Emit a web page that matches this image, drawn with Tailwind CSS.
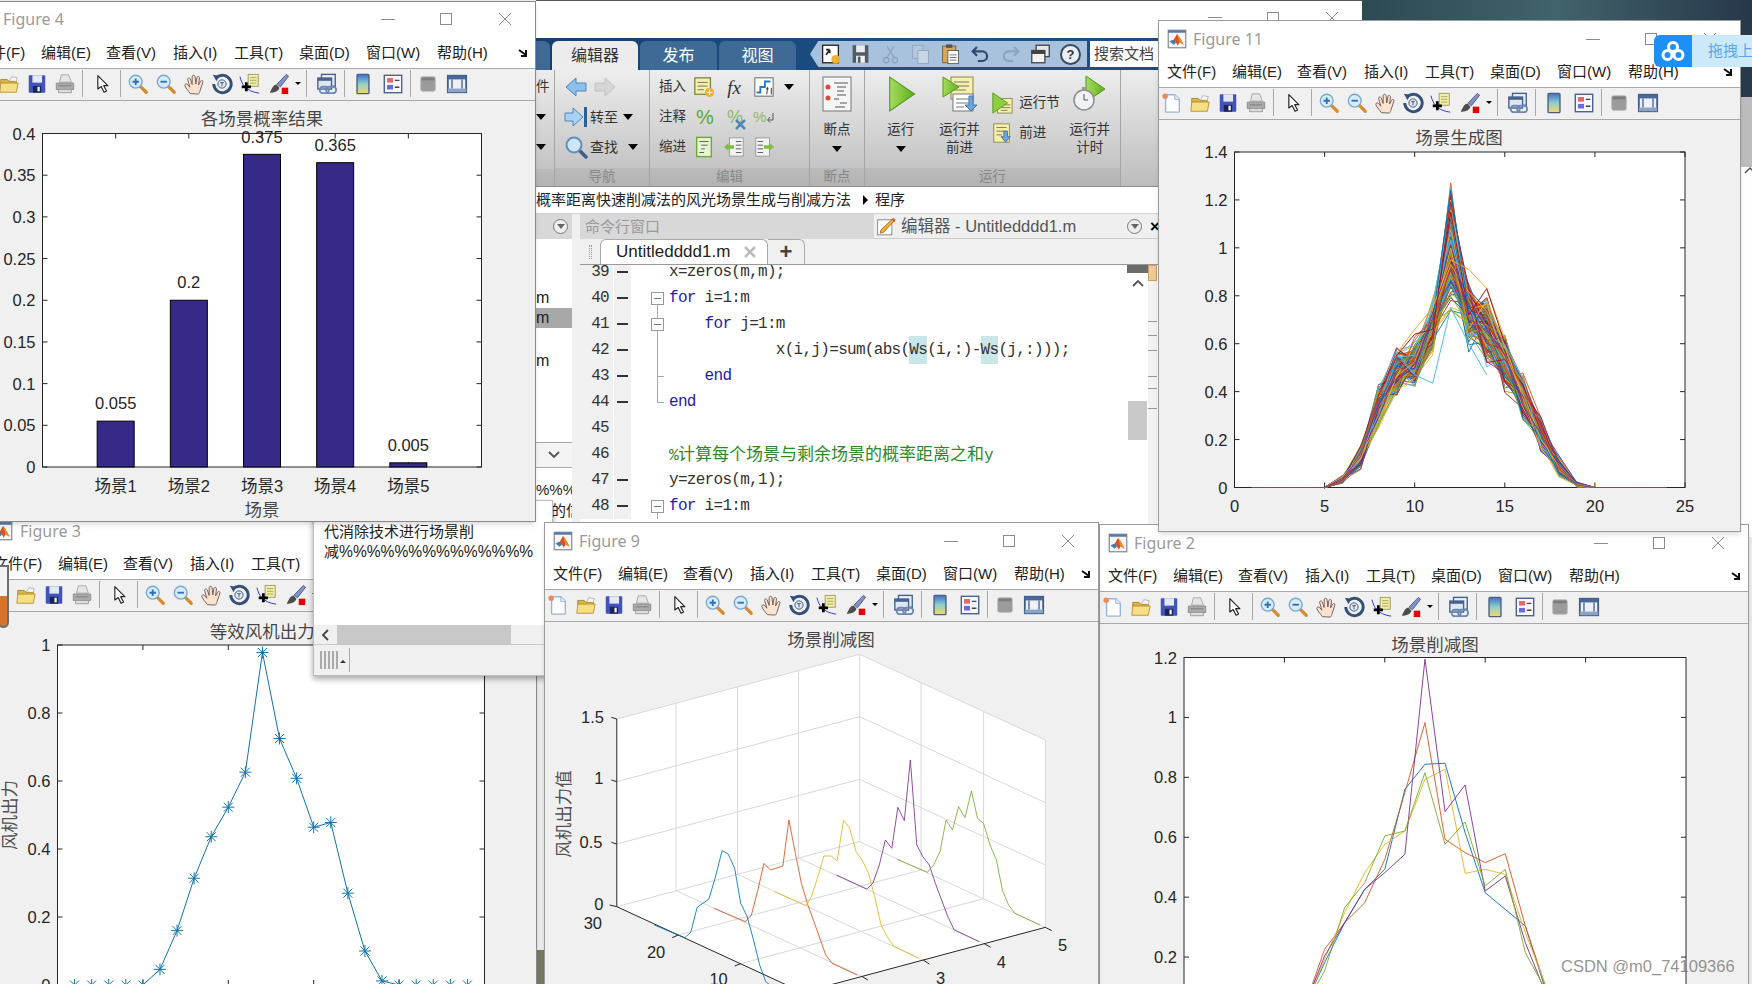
<!DOCTYPE html>
<html lang="zh">
<head>
  <meta charset="UTF-8" />
  <title>MATLAB Figures</title>
  <script src="https://cdn.jsdelivr.net/npm/@tailwindcss/browser@4"></script>
</head>
<body class="relative w-[1752px] h-[984px] overflow-hidden bg-[#ececec] font-['Liberation_Sans','Noto_Sans_CJK_SC',sans-serif] text-[#222]">

<!-- icon sheet -->
<svg class="absolute w-0 h-0">
  <defs>
    <linearGradient id="cbgrad" x1="0" y1="0" x2="0" y2="1"><stop offset="0" stop-color="#3f6fd0"/><stop offset=".5" stop-color="#8fd0c8"/><stop offset="1" stop-color="#f5d86a"/></linearGradient>
    <linearGradient id="playgrad" x1="0" y1="0" x2="1" y2="0"><stop offset="0" stop-color="#a6dc5c"/><stop offset="1" stop-color="#5fae20"/></linearGradient>
    <symbol id="i-new" viewBox="0 0 24 24"><path d="M5 3h10l5 5v13a1 1 0 0 1-1 1H6a1 1 0 0 1-1-1z" fill="#fdfdfe" stroke="#9ab4d6" stroke-width="1.5"/><path d="M15 3v5h5" fill="#e4edf8" stroke="#9ab4d6"/><circle cx="4.5" cy="4.5" r="3" fill="#ec8a5a"/></symbol>
    <symbol id="i-open" viewBox="0 0 24 24"><path d="M3 11V7h7l2 2h8v4z" fill="#d9b34a" stroke="#a8842a"/><path d="M13 8l2-4 6 1-1 4" fill="#f4f4f4" stroke="#b5b5b5"/><path d="M2 21l1-10h19l-2 10z" fill="#f6df85" stroke="#b8922f"/></symbol>
    <symbol id="i-save" viewBox="0 0 24 24"><rect x="3" y="2.5" width="18" height="19" rx="1" fill="#4254bb"/><rect x="7" y="2.5" width="10.5" height="8" fill="#e3e9f6"/><rect x="7.5" y="14" width="9" height="7.5" fill="#1b2457"/><rect x="12.5" y="15" width="2.5" height="5" fill="#f2f2f2"/></symbol>
    <symbol id="i-print" viewBox="0 0 24 24"><path d="M8 2h8l3 8H6z" fill="#e6e6e6" stroke="#a5a5a5"/><path d="M2.500 11h19v7h-19z" fill="#ababab" stroke="#8a8a8a"/><path d="M5 18h14v3.500H5z" fill="#dedede" stroke="#9a9a9a"/><path d="M5 14h14" stroke="#7c7c7c"/></symbol>
    <symbol id="i-arrow" viewBox="0 0 24 24"><path d="M7 2v16l4-3 3.500 7 3-1.500-3.500-6.500h5z" fill="#fff" stroke="#222" stroke-width="1.400" stroke-linejoin="round"/></symbol>
    <symbol id="i-zin" viewBox="0 0 24 24"><path d="M14.500 14.500l6.500 6.500" stroke="#d98a2b" stroke-width="3.500" stroke-linecap="round"/><circle cx="9.500" cy="9.500" r="7" fill="#d6ecfa" stroke="#7aa7cf" stroke-width="1.500"/><path d="M6 9.500h7M9.500 6v7" stroke="#2f6fb5" stroke-width="2"/></symbol>
    <symbol id="i-zout" viewBox="0 0 24 24"><path d="M14.500 14.500l6.500 6.500" stroke="#d98a2b" stroke-width="3.500" stroke-linecap="round"/><circle cx="9.500" cy="9.500" r="7" fill="#d6ecfa" stroke="#7aa7cf" stroke-width="1.500"/><path d="M6 9.500h7" stroke="#2f6fb5" stroke-width="2"/></symbol>
    <symbol id="i-hand" viewBox="0 0 24 24"><path d="M8 22.500c-2-3-6-7-6-9s2-2 3-1l2.500 3L5 7c0-2 2-2 3-.5l2 6V4c0-2 3-2 3.200 0l.8 8 1.200-7c.3-2 3-1.500 2.800.5l-1 7.500 2.200-4c1-1.500 3-.8 2.500 1l-3 9c-.5 2-1 3-2 4z" fill="#fbe2cf" stroke="#6b5a55"/></symbol>
    <symbol id="i-rot" viewBox="0 0 24 24"><path d="M6 5a9.500 9.500 0 1 1-3 7" fill="none" stroke="#34507a" stroke-width="3.200"/><path d="M2 2l7 1-3 6z" fill="#34507a"/><circle cx="12" cy="12" r="4.500" fill="#e3e9f2" stroke="#34507a"/><path d="M10 10.500h4M12 10.500v4" stroke="#34507a"/></symbol>
    <symbol id="i-dc" viewBox="0 0 24 24"><rect x="10" y="1.500" width="11" height="13" fill="#f5eda6" stroke="#9a9a66"/><path d="M12 5h7M12 8h7M12 11h7" stroke="#a5a56a"/><path d="M1 4c2 8 6 16 21 18" stroke="#2a2ad0" fill="none"/><path d="M8 10v10M3 15h10" stroke="#000" stroke-width="3"/></symbol>
    <symbol id="i-brush" viewBox="0 0 24 24"><path d="M20 1.500l2.500 2-9 11.500-3.500-3z" fill="#7f93c6" stroke="#4a5a8c"/><path d="M9.500 12.500c-3 0-5 3-7.500 9 4 0 9-1 10.500-5.500z" fill="#4d4d4d"/><rect x="15" y="16" width="7" height="7" fill="#e60000"/></symbol>
    <symbol id="i-link" viewBox="0 0 24 24"><rect x="6" y="1.500" width="15" height="13" fill="#e8eef8" stroke="#46618f" stroke-width="1.500"/><rect x="2" y="5.500" width="15" height="12" fill="#dfe6f2" stroke="#46618f" stroke-width="1.500"/><rect x="2" y="5.500" width="15" height="3" fill="#46618f"/><rect x="4" y="15" width="10" height="7" rx="3.500" fill="none" stroke="#6c88b5" stroke-width="2"/><rect x="11" y="15" width="11" height="7" rx="3.500" fill="none" stroke="#6c88b5" stroke-width="2"/></symbol>
    <symbol id="i-cb" viewBox="0 0 24 24"><rect x="5.500" y="1.500" width="13" height="21" rx="1" fill="url(#cbgrad)" stroke="#4b5f7d" stroke-width="1.500"/></symbol>
    <symbol id="i-leg" viewBox="0 0 24 24"><rect x="2.500" y="2.500" width="19" height="19" fill="#f7f7fb" stroke="#46618f" stroke-width="1.500"/><rect x="5.500" y="5.500" width="6.500" height="5" fill="#e06a6a"/><rect x="5.500" y="13" width="6.500" height="5" fill="#6a6ae0"/><path d="M14 8h5M14 15.500h5" stroke="#444" stroke-width="1.500"/></symbol>
    <symbol id="i-grey" viewBox="0 0 24 24"><rect x="4" y="4" width="16" height="16" rx="2" fill="#9b9b9b" stroke="#bdbdbd"/><rect x="5" y="5" width="14" height="3" fill="#7c7c7c"/></symbol>
    <symbol id="i-frame" viewBox="0 0 24 24"><rect x="2" y="3" width="20" height="18" fill="#eef2f8" stroke="#3f5d8c" stroke-width="2"/><rect x="2" y="3" width="20" height="4" fill="#4a6797"/><rect x="2" y="17" width="20" height="4" fill="#8ea3c4"/><path d="M6.500 7v10M17.500 7v10" stroke="#4a6797" stroke-width="1.500"/></symbol>
    <symbol id="i-matlab" viewBox="0 0 24 24"><rect x="1.500" y="1.500" width="21" height="21" fill="#f4f6fa" stroke="#8c8c8c" stroke-width="1.500"/><rect x="1.500" y="1.500" width="21" height="3" fill="#5b7aa8"/><path d="M3 15l5-2 4-7 3 4 5 9-5-3-2 4-3-5z" fill="#d9531e"/><path d="M3 15l5-2 3 3-3 3z" fill="#3d7fb5"/><path d="M12 6l3 4 5 9-5-3z" fill="#f28c28"/></symbol>
    <symbol id="r-back" viewBox="0 0 24 24"><path d="M2 12l10-9v5h10v8H12v5z" fill="#8cc0ec" stroke="#4f86bd"/></symbol>
    <symbol id="r-fwd" viewBox="0 0 24 24"><path d="M22 12L12 3v5H2v8h10v5z" fill="#d6d6d6" stroke="#c2c2c2"/></symbol>
    <symbol id="r-goto" viewBox="0 0 24 24"><path d="M1 8h8V3l10 9-10 9v-5H1z" fill="#a9d2f2" stroke="#4f86bd"/><path d="M21.500 2v20" stroke="#2f5f98" stroke-width="3"/></symbol>
    <symbol id="r-find" viewBox="0 0 24 24"><path d="M14 14l8 8" stroke="#3f5d8c" stroke-width="3.500" stroke-linecap="round"/><circle cx="10" cy="10" r="7.500" fill="#cfe4f6" stroke="#5f8fc0" stroke-width="2"/></symbol>
    <symbol id="r-ins" viewBox="0 0 24 24"><rect x="2" y="2" width="17" height="18" fill="#f7eea8" stroke="#7d8a55" stroke-width="1.500"/><path d="M5 7h11M5 11h11M5 15h7" stroke="#6a6a6a"/><circle cx="18" cy="18" r="5" fill="#f0b030"/><path d="M15 18h6M18 15v6" stroke="#fff"/></symbol>
    <symbol id="r-fi" viewBox="0 0 24 24"><rect x="2" y="2" width="20" height="20" fill="#fbfbfb" stroke="#777" stroke-width="1.200"/><path d="M4 18h4v-6h5V6h6" fill="none" stroke="#2a78c4" stroke-width="2"/><path d="M15 20l1-8M14 14h3M20 13v7" stroke="#333"/></symbol>
    <symbol id="r-indent" viewBox="0 0 24 24"><rect x="4" y="1.500" width="16" height="21" fill="#e6f4d0" stroke="#6aa83a" stroke-width="1.500"/><path d="M7 6h10M9 10h7M9 14h4M7 18h5" stroke="#555"/></symbol>
    <symbol id="r-indent2" viewBox="0 0 24 24"><rect x="7" y="2" width="15" height="20" fill="#f2f2f2" stroke="#999"/><path d="M14 6h6M14 10h6M14 14h6M14 18h6" stroke="#555"/><path d="M1 12l5-4v2h6v4H6v2z" fill="#7cc03c" transform="translate(0 0)"/></symbol>
    <symbol id="r-indent3" viewBox="0 0 24 24"><rect x="3" y="2" width="15" height="20" fill="#f2f2f2" stroke="#999"/><path d="M5 6h6M5 10h6M5 14h6M5 18h6" stroke="#555"/><path d="M23 12l-5-4v2h-6v4h6v2z" fill="#7cc03c"/></symbol>
    <symbol id="r-bp" viewBox="0 0 40 40"><rect x="6" y="3" width="28" height="34" fill="#f5f5f5" stroke="#777"/><circle cx="11" cy="13" r="2.500" fill="#d84a3a"/><circle cx="11" cy="24" r="2.500" fill="#d84a3a"/><path d="M17 9h14M20 13h9M20 17h7M20 21h9M17 25h5M23 29h7M18 33h10" stroke="#555"/></symbol>
    <symbol id="r-play" viewBox="0 0 32 36"><path d="M6 3l22 15L6 33z" fill="url(#playgrad)" stroke="#4f9a1a"/></symbol>
    <symbol id="r-runadv" viewBox="0 0 40 40"><rect x="12" y="3" width="22" height="22" fill="#f7eea8" stroke="#8a8a55"/><path d="M15 8h15M15 12h15M15 16h12" stroke="#777"/><rect x="14" y="20" width="20" height="17" fill="#fff" stroke="#777"/><path d="M17 25h13M17 29h13M17 33h8" stroke="#777"/><path d="M4 3l16 10-16 10z" fill="url(#playgrad)" stroke="#4f9a1a"/><path d="M30 22v9h-4l6 6 6-6h-4v-9z" fill="#6fa6dc" stroke="#3f76ae"/></symbol>
    <symbol id="r-runsec" viewBox="0 0 24 24"><rect x="7" y="7" width="16" height="16" fill="#f7eea8" stroke="#8a8a55"/><path d="M11 14h10M11 17h10M11 20h7" stroke="#7a7a55"/><path d="M2 1l16 11L2 23z" fill="#8fce42" stroke="#4f9a1a"/></symbol>
    <symbol id="r-adv" viewBox="0 0 24 24"><rect x="3" y="2" width="17" height="20" fill="#f7eea8" stroke="#8a8a55"/><path d="M6 6h11M6 10h11M6 14h6" stroke="#7a7a55"/><path d="M14 10v6h-3l5 6 5-6h-3v-6z" fill="#6fa6dc" stroke="#3f76ae"/></symbol>
    <symbol id="r-timer" viewBox="0 0 40 40"><path d="M16 2l19 13-19 13z" fill="url(#playgrad)" stroke="#4f9a1a"/><circle cx="14" cy="26" r="10" fill="#f0f2f5" stroke="#8c8c8c" stroke-width="1.500"/><path d="M14 20v6h4" stroke="#555" fill="none"/><rect x="12" y="13" width="4" height="3" fill="#999"/></symbol>
    <symbol id="q-dark" viewBox="0 0 24 24"><rect x="3" y="2" width="18" height="20" fill="#fff" stroke="#222" stroke-width="1.500"/><path d="M7 13l4-6M11 7H7M11 7v4" stroke="#222" stroke-width="2" fill="none"/><circle cx="18" cy="18" r="5" fill="#f0b030"/></symbol>
    <symbol id="q-save" viewBox="0 0 24 24"><rect x="3" y="2" width="18" height="20" fill="#525a63"/><rect x="7" y="2" width="10" height="8" fill="#e8ecf2"/><rect x="7" y="14" width="10" height="8" fill="#f2f2f2"/><rect x="9" y="15" width="3" height="7" fill="#525a63"/></symbol>
    <symbol id="q-cut" viewBox="0 0 24 24"><path d="M8 3l8 13M16 3L8 16" stroke="#8fa3b8" stroke-width="1.500"/><circle cx="7" cy="19" r="3" fill="none" stroke="#8fa3b8" stroke-width="1.500"/><circle cx="17" cy="19" r="3" fill="none" stroke="#8fa3b8" stroke-width="1.500"/></symbol>
    <symbol id="q-copy" viewBox="0 0 24 24"><rect x="3" y="2" width="12" height="15" fill="#b5c7da" stroke="#8fa3b8"/><rect x="9" y="8" width="12" height="15" fill="#c8d7e6" stroke="#8fa3b8"/></symbol>
    <symbol id="q-paste" viewBox="0 0 24 24"><rect x="3" y="3" width="15" height="19" fill="#d7a85c" stroke="#6a5a3a"/><rect x="7" y="1" width="7" height="4" fill="#555"/><rect x="9" y="8" width="12" height="15" fill="#fff" stroke="#555"/><path d="M11 13h8M11 16h8M11 19h8" stroke="#666"/></symbol>
    <symbol id="q-undo" viewBox="0 0 24 24"><path d="M8 4L3 9l5 5M3 9h11a5.500 5.500 0 0 1 0 11H9" fill="none" stroke="#2f4a6e" stroke-width="2.500"/></symbol>
    <symbol id="q-redo" viewBox="0 0 24 24"><path d="M16 4l5 5-5 5M21 9H10a5.500 5.500 0 0 0 0 11h5" fill="none" stroke="#8fa3b8" stroke-width="2.500"/></symbol>
    <symbol id="q-win" viewBox="0 0 24 24"><rect x="7" y="2" width="15" height="13" fill="#e6e6e6" stroke="#444" stroke-width="1.500"/><rect x="2" y="8" width="15" height="14" fill="#f2f2f2" stroke="#444" stroke-width="1.500"/><rect x="2" y="8" width="15" height="4" fill="#444"/></symbol>
    <symbol id="edit-i" viewBox="0 0 24 24"><rect x="2" y="4" width="17" height="18" fill="#fff" stroke="#777"/><path d="M21 2l2 2L9 19l-4 1 1-4z" fill="#f0b030" stroke="#a85a20"/><path d="M19.500 3l3 3" stroke="#d84a3a" stroke-width="2"/></symbol>
  </defs>
</svg>

<!-- reusable figure chrome -->
<template id="fig-menu">
  <span class="w-[65px] shrink-0">文件(F)</span>
  <span class="w-[65px] shrink-0">编辑(E)</span>
  <span class="w-[67px] shrink-0">查看(V)</span>
  <span class="w-[61px] shrink-0">插入(I)</span>
  <span class="w-[65px] shrink-0">工具(T)</span>
  <span class="w-[67px] shrink-0">桌面(D)</span>
  <span class="w-[71px] shrink-0">窗口(W)</span>
  <span class="w-[65px] shrink-0">帮助(H)</span>
</template>
<template id="fig-tools">
  <svg class="ml-[2px] mr-[3px] w-[22px] h-[22px] shrink-0"><use href="#i-new"/></svg>
  <svg class="mx-[3px] w-[22px] h-[22px] shrink-0"><use href="#i-open"/></svg>
  <svg class="mx-[3px] w-[22px] h-[22px] shrink-0"><use href="#i-save"/></svg>
  <svg class="mx-[3px] w-[22px] h-[22px] shrink-0"><use href="#i-print"/></svg>
  <span class="ml-[3px] w-px h-[27px] bg-[#a8a8a8] shrink-0"></span>
  <svg class="mr-[8px] w-[20px] h-[20px] shrink-0 ml-[9px]"><use href="#i-arrow"/></svg>
  <span class="w-px h-[27px] bg-[#a8a8a8] shrink-0"></span>
  <svg class="ml-[6px] mr-[3px] w-[22px] h-[22px] shrink-0"><use href="#i-zin"/></svg>
  <svg class="mx-[3px] w-[22px] h-[22px] shrink-0"><use href="#i-zout"/></svg>
  <svg class="mx-[3px] w-[22px] h-[22px] shrink-0"><use href="#i-hand"/></svg>
  <svg class="mx-[3px] w-[22px] h-[22px] shrink-0"><use href="#i-rot"/></svg>
  <svg class="mx-[3px] w-[22px] h-[22px] shrink-0"><use href="#i-dc"/></svg>
  <svg class="mx-[3.500px] w-[22px] h-[22px] shrink-0"><use href="#i-brush"/></svg>
  <span class="ml-[2px] w-0 h-0 border-x-[3px] border-t-[3px] border-x-transparent border-t-black shrink-0"></span>
  <span class="ml-[5px] w-px h-[27px] bg-[#a8a8a8] shrink-0"></span>
  <svg class="ml-[9px] mr-[6px] w-[22px] h-[22px] shrink-0"><use href="#i-link"/></svg>
  <span class="w-px h-[27px] bg-[#a8a8a8] shrink-0"></span>
  <svg class="ml-[7px] mr-[5px] w-[22px] h-[22px] shrink-0"><use href="#i-cb"/></svg>
  <svg class="mx-[3px] w-[22px] h-[22px] shrink-0"><use href="#i-leg"/></svg>
  <span class="ml-[3px] w-px h-[27px] bg-[#a8a8a8] shrink-0"></span>
  <svg class="ml-[6px] mr-[4px] w-[22px] h-[22px] shrink-0"><use href="#i-grey"/></svg>
  <svg class="mx-[3px] w-[22px] h-[22px] shrink-0"><use href="#i-frame"/></svg>
</template>
<template id="win-ctrl">
  <span class="w-[14px] h-px bg-[#8c8c8c] mr-[45px]"></span>
  <span class="w-[12px] h-[12px] border border-[#8c8c8c] mr-[46px]"></span>
  <svg class="w-[14px] h-[14px] mr-[23px]" viewBox="0 0 14 14"><path d="M1 1l12 12M13 1L1 13" stroke="#8c8c8c"/></svg>
</template>

<!-- wallpaper and the window behind everything -->
<div class="absolute left-[1362px] top-0 w-[390px] h-[97px] bg-gradient-to-r from-[#2c4a52] via-[#41636b] to-[#27384a]"></div>
<div class="absolute left-[1741px] top-[97px] w-[11px] h-[70px] bg-[#bdbdbd]"></div>
<div class="absolute left-[1741px] top-[167px] w-[11px] h-[370px] bg-white"><svg class="w-[11px] h-[10px] mt-[-1px] ml-[3px]" viewBox="0 0 11 10"><path d="M1 7l5-5 5 5" fill="none" stroke="#555" stroke-width="1.500"/></svg></div>
<div class="absolute left-[537px] top-[950px] w-[7px] h-[34px] bg-[#7b7a60]"></div>

<!-- MATLAB main window -->
<section class="absolute left-[536px] top-0 w-[826px] h-[540px] z-10 bg-white flex flex-col overflow-hidden border-t border-[#555]">
  <div class="h-[37px] shrink-0 flex items-center justify-end pb-[4px]" data-ctrl></div>
  <!-- tab strip -->
  <div class="h-[32px] shrink-0 flex items-end bg-gradient-to-r from-[#143f70] via-[#1d5288] to-[#1b4a7a] text-white text-[16px]">
    <div class="w-[14px] h-[29px] bg-[#3e6a95] rounded-tr-md"></div>
    <div class="ml-[2px] w-[86px] h-[29px] rounded-t-md bg-[#ececec] text-[#333] flex items-center justify-center">编辑器</div>
    <div class="ml-[2px] w-[77px] h-[29px] rounded-t-md bg-[#3e6a95] flex items-center justify-center">发布</div>
    <div class="ml-[2px] w-[77px] h-[29px] rounded-t-md bg-[#3e6a95] flex items-center justify-center">视图</div>
    <div class="ml-[14px] w-[277px] h-[26px] mb-[3px] bg-[#a8c2dd] flex items-center [clip-path:polygon(3%_0,100%_0,100%_100%,3%_100%,0_50%)] pl-[10px] gap-[9px]">
      <svg class="w-[21px] h-[22px] shrink-0"><use href="#q-dark"/></svg>
      <svg class="w-[21px] h-[22px] shrink-0"><use href="#q-save"/></svg>
      <svg class="w-[21px] h-[22px] shrink-0"><use href="#q-cut"/></svg>
      <svg class="w-[21px] h-[22px] shrink-0"><use href="#q-copy"/></svg>
      <svg class="w-[21px] h-[22px] shrink-0"><use href="#q-paste"/></svg>
      <svg class="w-[21px] h-[22px] shrink-0"><use href="#q-undo"/></svg>
      <svg class="w-[21px] h-[22px] shrink-0"><use href="#q-redo"/></svg>
      <svg class="w-[21px] h-[22px] shrink-0"><use href="#q-win"/></svg>
      <span class="w-[21px] h-[21px] shrink-0 rounded-full bg-[#e8eef5] border-2 border-[#3a4a5c] text-[#333] text-[13px] font-bold leading-[17px] text-center">?</span>
    </div>
    <div class="ml-[3px] w-[70px] h-[26px] mb-[3px] bg-white text-[#444] text-[15px] pl-[4px] leading-[26px] whitespace-nowrap overflow-hidden">搜索文档</div>
  </div>
  <!-- ribbon -->
  <div class="h-[117px] shrink-0 flex text-[13.500px] text-[#333] border-b border-[#8c8c8c] bg-gradient-to-b from-[#ededed] to-[#bdbdbd]">
    <div class="w-[19px] shrink-0 flex flex-col border-r border-[#a5a5a5]">
      <div class="h-[99px] pt-[2px]">
        <div class="h-[30px] flex items-center">件</div>
        <div class="h-[30px] flex items-center"><span class="w-0 h-0 border-x-[5px] border-t-[6px] border-x-transparent border-t-black"></span></div>
        <div class="h-[30px] flex items-center"><span class="w-0 h-0 border-x-[5px] border-t-[6px] border-x-transparent border-t-black"></span></div>
      </div>
      <div class="flex-1 bg-black/5"></div>
    </div>
    <div class="w-[95px] shrink-0 flex flex-col border-r border-[#a5a5a5]">
      <div class="h-[99px] pt-[2px] pl-[9px]">
        <div class="h-[30px] flex items-center gap-[5px]"><svg class="w-[24px] h-[24px]"><use href="#r-back"/></svg><svg class="w-[24px] h-[24px]"><use href="#r-fwd"/></svg></div>
        <div class="h-[30px] flex items-center"><svg class="w-[24px] h-[24px] mr-[2px]"><use href="#r-goto"/></svg><span class="text-[14px]">转至</span><span class="ml-[5px] w-0 h-0 border-x-[5px] border-t-[6px] border-x-transparent border-t-black"></span></div>
        <div class="h-[30px] flex items-center"><svg class="w-[24px] h-[24px] mr-[2px]"><use href="#r-find"/></svg><span class="text-[14px]">查找</span><span class="ml-[10px] w-0 h-0 border-x-[5px] border-t-[6px] border-x-transparent border-t-black"></span></div>
      </div>
      <div class="flex-1 bg-black/5 text-center text-[#888] leading-[18px]">导航</div>
    </div>
    <div class="w-[160px] shrink-0 flex flex-col border-r border-[#a5a5a5]">
      <div class="h-[99px] pt-[2px] pl-[9px]">
        <div class="h-[30px] flex items-center"><span class="w-[30px]">插入</span><svg class="ml-[4px] w-[22px] h-[24px]"><use href="#r-ins"/></svg><span class="ml-[7px] w-[24px] text-center font-['Liberation_Serif'] italic text-[19px] leading-none">fx</span><svg class="ml-[7px] w-[22px] h-[24px]"><use href="#r-fi"/></svg><span class="ml-[9px] w-0 h-0 border-x-[5px] border-t-[6px] border-x-transparent border-t-black"></span></div>
        <div class="h-[30px] flex items-center text-[#5ba824]">
          <span class="w-[30px] text-[#333]">注释</span>
          <span class="ml-[5px] w-[22px] text-[20px] text-center">%</span>
          <span class="relative ml-[7px] w-[24px] text-[18px] text-center text-[#8fb86a]">%<svg class="absolute right-[1px] bottom-[1px] w-[11px] h-[11px]" viewBox="0 0 11 11"><path d="M1 1l9 9M10 1l-9 9" stroke="#4f86bd" stroke-width="2.500"/></svg></span>
          <span class="relative ml-[6px] w-[22px] text-[15px] text-left text-[#8fb86a]">%<svg class="absolute right-0 top-[6px] w-[8px] h-[11px]" viewBox="0 0 8 11"><path d="M6 1v7H1M3 5L0.500 8 3 10.500" fill="none" stroke="#555"/></svg></span>
        </div>
        <div class="h-[30px] flex items-center"><span class="w-[30px]">缩进</span><svg class="ml-[4px] w-[22px] h-[24px]"><use href="#r-indent"/></svg><svg class="ml-[8px] w-[22px] h-[24px]"><use href="#r-indent2"/></svg><svg class="ml-[8px] w-[22px] h-[24px]"><use href="#r-indent3"/></svg></div>
      </div>
      <div class="flex-1 bg-black/5 text-center text-[#888] leading-[18px]">编辑</div>
    </div>
    <div class="w-[55px] shrink-0 flex flex-col border-r border-[#a5a5a5]">
      <div class="h-[99px] flex flex-col items-center pt-[3px]">
        <svg class="w-[40px] h-[42px]"><use href="#r-bp"/></svg>
        <span class="mt-[6px] h-[18px] leading-[18px]">断点</span>
        <span class="mt-[7px] w-0 h-0 border-x-[5px] border-t-[6px] border-x-transparent border-t-black"></span>
      </div>
      <div class="flex-1 bg-black/5 text-center text-[#888] leading-[18px]">断点</div>
    </div>
    <div class="w-[256px] shrink-0 flex flex-col border-r border-[#a5a5a5]">
      <div class="h-[99px] flex leading-[18px]">
        <div class="w-[72px] flex flex-col items-center pt-[3px]"><svg class="w-[36px] h-[42px]"><use href="#r-play"/></svg><span class="mt-[6px]">运行</span><span class="mt-[7px] w-0 h-0 border-x-[5px] border-t-[6px] border-x-transparent border-t-black"></span></div>
        <div class="w-[46px] flex flex-col items-center pt-[3px]"><svg class="w-[40px] h-[42px]"><use href="#r-runadv"/></svg><span class="mt-[6px] whitespace-nowrap">运行并</span><span>前进</span></div>
        <div class="w-[77px] flex flex-col pl-[9px] pt-[22px] gap-[8px]">
          <div class="flex items-center h-[22px] gap-[6px]"><svg class="w-[22px] h-[24px] shrink-0"><use href="#r-runsec"/></svg><span class="whitespace-nowrap">运行节</span></div>
          <div class="flex items-center h-[22px] gap-[6px]"><svg class="w-[22px] h-[24px] shrink-0"><use href="#r-adv"/></svg><span>前进</span></div>
        </div>
        <div class="w-[61px] flex flex-col items-center pt-[3px]"><svg class="w-[40px] h-[42px]"><use href="#r-timer"/></svg><span class="mt-[6px] whitespace-nowrap">运行并</span><span>计时</span></div>
      </div>
      <div class="flex-1 bg-black/5 text-center text-[#888] leading-[18px]">运行</div>
    </div>
    <div class="flex-1"></div>
  </div>
  <!-- address -->
  <div class="h-[27px] shrink-0 flex items-center text-[15px] whitespace-nowrap border-b border-[#d0d0d0] bg-white">
    <span class="w-[319px] overflow-hidden">概率距离快速削减法的风光场景生成与削减方法</span>
    <span class="ml-[8px] w-0 h-0 border-y-[5px] border-l-[5px] border-y-transparent border-l-black"></span>
    <span class="ml-[7px]">程序</span>
  </div>
  <!-- panes -->
  <div class="flex-1 flex min-h-0">
    <!-- current folder -->
    <div class="w-[44px] shrink-0 flex flex-col border-r-[8px] border-[#f0f0f0]">
      <div class="h-[25px] shrink-0 bg-[#d8d8d8] flex items-center justify-end pr-[4px]"><span class="w-[15px] h-[15px] rounded-full border border-[#777] bg-[#eee] flex items-center justify-center"><span class="w-0 h-0 border-x-[4px] border-t-[5px] border-x-transparent border-t-[#666]"></span></span></div>
      <div class="h-[203px] shrink-0 bg-white text-[16px] flex flex-col overflow-hidden">
        <div class="mt-[48px] h-[21px] leading-[21px]">m</div>
        <div class="h-[20px] leading-[20px] bg-[#a8a8a8]">m</div>
        <div class="mt-[22px] h-[22px] leading-[22px]">m</div>
      </div>
      <div class="h-[26px] shrink-0 bg-[#f4f4f4] border-y border-[#aaa] flex items-center justify-center"><svg class="w-[12px] h-[8px]" viewBox="0 0 12 8"><path d="M1 1l5 5 5-5" fill="none" stroke="#555" stroke-width="1.800"/></svg></div>
      <div class="flex-1 bg-white text-[15px] leading-[21px] whitespace-nowrap overflow-hidden pt-[11px]">%%%%<br>离的信</div>
    </div>
    <div class="flex-1 flex flex-col min-w-0">
      <div class="h-[25px] shrink-0 flex text-[15px]">
        <div class="w-[294px] bg-[#d8d8d8] text-[#9a9a9a] pl-[5px] leading-[25px]">命令行窗口</div>
        <div class="flex-1 bg-[#efefef] border-b border-[#ccc] flex items-center text-[#555] pl-[2px] text-[16.500px] min-w-0">
          <svg class="w-[20px] h-[21px] shrink-0"><use href="#edit-i"/></svg>
          <span class="ml-[5px] w-[226px] shrink-0 whitespace-nowrap">编辑器 - Untitledddd1.m</span>
          <span class="shrink-0 w-[15px] h-[15px] rounded-full border border-[#777] bg-[#eee] flex items-center justify-center"><span class="w-0 h-0 border-x-[4px] border-t-[5px] border-x-transparent border-t-[#666]"></span></span>
          <span class="ml-[8px] shrink-0 font-bold text-black">×</span>
        </div>
      </div>
      <!-- open files -->
      <div class="h-[26px] shrink-0 bg-[#f0f0f0] border-b border-[#999] flex items-end">
        <div class="w-[20px] h-full flex items-center justify-center"><span class="w-[3px] h-[14px] border-x border-dotted border-[#999]"></span></div>
        <div class="w-[168px] h-[25px] bg-white border border-b-0 border-[#aaa] rounded-t-md flex items-center text-[17px] pl-[15px] text-[#222] whitespace-nowrap">Untitledddd1.m<svg class="ml-[14px] w-[12px] h-[12px] shrink-0" viewBox="0 0 12 12"><path d="M1 1l10 10M11 1L1 11" stroke="#bbb" stroke-width="2.500"/></svg></div>
        <div class="w-[37px] h-[25px] bg-[#f0f0f0] border border-l-0 border-b-0 border-[#aaa] rounded-tr-md text-center text-[22px] font-bold leading-[24px] text-[#444]">+</div>
      </div>
      <!-- code -->
      <div class="flex-1 flex min-h-0 overflow-hidden bg-white">
        <div class="w-[547px] shrink-0 overflow-hidden font-['Liberation_Mono','Noto_Sans_CJK_SC',monospace] text-[16px] tracking-[-0.7px] text-[#333]">
          <div class="mt-[-6px]" id="code"></div>
        </div>
        <div class="w-[21px] shrink-0 flex flex-col items-center bg-white">
          <div class="w-full h-[8px] bg-[#6b6b6b]"></div>
          <svg class="mt-[6px] w-[12px] h-[8px]" viewBox="0 0 12 8"><path d="M1 7l5-5 5 5" fill="none" stroke="#555" stroke-width="1.800"/></svg>
          <div class="mt-[114px] w-[19px] h-[39px] bg-[#c9c9c9]"></div>
        </div>
        <div class="w-[9px] shrink-0 flex flex-col bg-[#f2f2f2]">
          <div class="h-[16px] bg-[#f0c894] border border-[#c9a06a]"></div>
          <div class="mt-[40px] h-[1px] bg-[#999]"></div>
          <div class="mt-[13px] h-[1px] bg-[#999]"></div>
          <div class="mt-[14px] h-[1px] bg-[#999]"></div>
          <div class="mt-[25px] h-[1px] bg-[#999]"></div>
          <div class="mt-[11px] h-[1px] bg-[#999]"></div>
          <div class="mt-[19px] h-[1px] bg-[#999]"></div>
        </div>
      </div>
    </div>
  </div>
</section>

<!-- Figure 3 -->
<section class="absolute left-[-16px] top-[512px] w-[553px] h-[490px] z-20 bg-[#f0f0f0] flex flex-col border border-[#8a8a8a] shadow-md">
  <div class="h-[36px] shrink-0 bg-white flex items-center pl-[8px] text-[16px] text-[#9a9a9a] font-['Noto_Sans','Noto_Sans_CJK_SC',sans-serif]"><svg class="w-[20px] h-[20px] mr-[7px]"><use href="#i-matlab"/></svg>Figure 3</div>
  <div class="h-[31px] shrink-0 bg-white flex items-center pl-[8px] text-[15px] whitespace-nowrap border-b border-[#a8a8a8]" data-menu></div>
  <div class="h-[32px] shrink-0 flex items-center pb-[2px] border-b border-[#a8a8a8]" data-tools></div>
  <svg class="block" width="551" height="373" viewBox="-15 612 551 373" id="fig3"></svg>
</section>

<!-- floating command panel -->
<section class="absolute left-[313px] top-[500px] w-[240px] h-[176px] z-30 bg-white flex flex-col border border-[#bdbdbd] shadow-[0_3px_6px_rgba(0,0,0,0.35)]">
  <div class="h-[124px] pt-[21px] pl-[10px] text-[15px] leading-[20px] whitespace-nowrap overflow-hidden text-[#222]">代消除技术进行场景削<br>减<span class="text-[15.600px]">%%%%%%%%%%%%%%</span></div>
  <div class="h-[20px] shrink-0 bg-[#f0f0f0] flex items-center border-b border-[#ccc]"><svg class="ml-[7px] w-[9px] h-[12px]" viewBox="0 0 9 12"><path d="M7 1L2 6l5 5" fill="none" stroke="#444" stroke-width="1.800"/></svg><span class="ml-[7px] w-[174px] h-[20px] bg-[#c8c8c8]"></span></div>
  <div class="flex-1 bg-[#f0f0f0] flex items-center"><span class="ml-[6px] w-[18px] h-[18px] bg-[repeating-linear-gradient(90deg,#aaa_0_2px,#eee_2px_4px)]"></span><span class="ml-[2px] mt-[2px] w-0 h-0 border-x-[3px] border-b-[3px] border-x-transparent border-b-[#333]"></span><span class="ml-[3px] w-px h-[24px] bg-[#aaa]"></span></div>
</section>

<div class="absolute left-[-2px] top-[565px] w-[11px] h-[63px] z-40 rounded-b-md border-2 border-[#6d6d6d] bg-gradient-to-b from-[#f4f4f4] from-50% to-[#d9722a] to-50%"></div>

<!-- Figure 4 -->
<section class="absolute left-[-33px] top-[1px] w-[569px] h-[521px] z-40 bg-[#f0f0f0] flex flex-col border border-[#8a8a8a] shadow-md">
  <div class="h-[36px] shrink-0 bg-white flex items-center pl-[35px] pb-[2px] text-[16px] text-[#9a9a9a] font-['Noto_Sans','Noto_Sans_CJK_SC',sans-serif]">Figure 4<div class="ml-auto flex items-center" data-ctrl></div></div>
  <div class="h-[31px] shrink-0 bg-white flex items-center pl-[8px] text-[15px] whitespace-nowrap border-b border-[#a8a8a8]"><div class="flex" data-menu></div><span class="ml-auto mr-[5px]" data-more></span></div>
  <div class="h-[32px] shrink-0 flex items-center pb-[2px] border-b border-[#a8a8a8]" data-tools></div>
  <svg class="block" width="567" height="420" viewBox="-32 101 567 420" id="fig4"></svg>
</section>

<!-- Figure 9 -->
<section class="absolute left-[544px] top-[522px] w-[555px] h-[480px] z-50 bg-[#f0f0f0] flex flex-col border border-[#9a9a9a] shadow-md">
  <div class="h-[36px] shrink-0 bg-white flex items-center pl-[8px] text-[16px] text-[#9a9a9a] font-['Noto_Sans','Noto_Sans_CJK_SC',sans-serif]"><svg class="w-[20px] h-[20px] mr-[6px]"><use href="#i-matlab"/></svg>Figure 9<div class="ml-auto flex items-center" data-ctrl></div></div>
  <div class="h-[31px] shrink-0 bg-white flex items-center pl-[8px] text-[15px] whitespace-nowrap border-b border-[#a8a8a8]"><div class="flex" data-menu></div><span class="ml-auto mr-[5px]" data-more></span></div>
  <div class="h-[32px] shrink-0 flex items-center pb-[2px] border-b border-[#a8a8a8]" data-tools></div>
  <svg class="block" width="553" height="363" viewBox="545 622 553 363" id="fig9"></svg>
</section>

<!-- Figure 2 -->
<section class="absolute left-[1099px] top-[524px] w-[650px] h-[480px] z-40 bg-[#f0f0f0] flex flex-col border border-[#9a9a9a] shadow-md">
  <div class="h-[36px] shrink-0 bg-white flex items-center pl-[8px] text-[16px] text-[#9a9a9a] font-['Noto_Sans','Noto_Sans_CJK_SC',sans-serif]"><svg class="w-[20px] h-[20px] mr-[6px]"><use href="#i-matlab"/></svg>Figure 2<div class="ml-auto flex items-center" data-ctrl></div></div>
  <div class="h-[31px] shrink-0 bg-white flex items-center pl-[8px] text-[15px] whitespace-nowrap border-b border-[#a8a8a8]"><div class="flex" data-menu></div><span class="ml-auto mr-[5px]" data-more></span></div>
  <div class="h-[32px] shrink-0 flex items-center pb-[2px] border-b border-[#a8a8a8]" data-tools></div>
  <svg class="block" width="648" height="361" viewBox="1100 624 648 361" id="fig2"></svg>
</section>

<!-- Figure 11 -->
<section class="absolute left-[1158px] top-[20px] w-[583px] h-[512px] z-[60] bg-[#f0f0f0] flex flex-col border border-[#9a9a9a] shadow-md">
  <div class="h-[36px] shrink-0 bg-white flex items-center pl-[8px] text-[16px] text-[#9a9a9a] font-['Noto_Sans','Noto_Sans_CJK_SC',sans-serif]"><svg class="w-[20px] h-[20px] mr-[6px]"><use href="#i-matlab"/></svg>Figure 11<div class="ml-auto flex items-center" data-ctrl></div></div>
  <div class="h-[31px] shrink-0 bg-white flex items-center pl-[8px] text-[15px] whitespace-nowrap border-b border-[#a8a8a8]"><div class="flex" data-menu></div><span class="ml-auto mr-[5px]" data-more></span></div>
  <div class="h-[32px] shrink-0 flex items-center pb-[2px] border-b border-[#a8a8a8]" data-tools></div>
  <svg class="block" width="581" height="411" viewBox="1159 120 581 411" id="fig11"></svg>
</section>

<!-- netdisk drop widget -->
<div class="absolute left-[1654px] top-[35px] w-[98px] h-[32px] z-[70] flex">
  <div class="w-[38px] h-full bg-[#1e90f5] rounded-l-md flex items-center justify-center">
    <svg class="w-[24px] h-[22px]" viewBox="0 0 24 22"><circle cx="12" cy="7" r="4.500" fill="none" stroke="#fff" stroke-width="3"/><circle cx="6.500" cy="15" r="4.500" fill="none" stroke="#fff" stroke-width="3"/><circle cx="17.500" cy="15" r="4.500" fill="none" stroke="#fff" stroke-width="3"/></svg>
  </div>
  <div class="flex-1 bg-[#cce9fb] text-[#5aa7e5] text-[15px] leading-[32px] pl-[16px] whitespace-nowrap overflow-hidden">拖拽上传</div>
</div>

<div class="absolute left-[1561px] top-[956px] z-[80] text-[16.500px] leading-[20px] text-[#777]/80 whitespace-nowrap">CSDN @m0_74109366</div>

<script>
  document.addEventListener('DOMContentLoaded', () => {
    // Fensterelemente einsetzen
    const fill = (sel, id) => document.querySelectorAll(sel).forEach(el => el.append(document.getElementById(id).content.cloneNode(true)));
    fill('[data-menu]', 'fig-menu');
    fill('[data-tools]', 'fig-tools');
    fill('[data-ctrl]', 'win-ctrl');
    document.querySelectorAll('[data-more]').forEach(el => {
      el.innerHTML = '<svg width="12" height="10" viewBox="0 0 12 10"><path d="M1 2l7 5M8 2v6H3" fill="none" stroke="#111" stroke-width="2"/></svg>';
    });

    const ink = '#262626';
    const txt = (x, y, s, size = 16.5, anchor = 'middle', extra = '') =>
      `<text x="${x}" y="${y}" font-size="${size}" text-anchor="${anchor}" dominant-baseline="central" fill="${ink}" ${extra}>${s}</text>`;
    const line = (x1, y1, x2, y2, c = ink, w = 1) => `<line x1="${x1}" y1="${y1}" x2="${x2}" y2="${y2}" stroke="${c}" stroke-width="${w}"/>`;
    const poly = (pts, c, w = 1) => `<polyline fill="none" stroke="${c}" stroke-width="${w}" stroke-linejoin="round" points="${pts.map(p => p.join(',')).join(' ')}"/>`;

    // 2D-Achsen mit Ticks auf allen Seiten
    function axes(o) {
      const sx = v => o.x0 + (v - o.xmin) / (o.xmax - o.xmin) * (o.x1 - o.x0);
      const sy = v => o.y0 - (v - o.ymin) / (o.ymax - o.ymin) * (o.y0 - o.y1);
      let s = `<rect x="${o.x0}" y="${o.y1}" width="${o.x1 - o.x0}" height="${o.y0 - o.y1}" fill="#fff" stroke="${ink}"/>`;
      o.xt.forEach(v => {
        s += line(sx(v), o.y0, sx(v), o.y0 - 5) + line(sx(v), o.y1, sx(v), o.y1 + 5);
        if (o.xlab) s += txt(sx(v), o.y0 + 18, o.xlab(v));
      });
      o.yt.forEach(v => {
        s += line(o.x0, sy(v), o.x0 + 5, sy(v)) + line(o.x1, sy(v), o.x1 - 5, sy(v));
        s += txt(o.x0 - 7, sy(v), o.ylab(v), 16.5, 'end');
      });
      return { s, sx, sy };
    }
    const colors = ['#0072BD', '#D95319', '#EDB120', '#7E2F8E', '#77AC30', '#4DBEEE', '#A2142F'];

    // Figure 4
    {
      const a = axes({ x0: 42.5, x1: 481.5, y0: 467, y1: 133.5, xmin: 0, xmax: 6, ymin: 0, ymax: .4, xt: [1, 2, 3, 4, 5], yt: [0, .05, .1, .15, .2, .25, .3, .35, .4], ylab: v => String(+v.toFixed(2)) });
      let s = a.s;
      [.055, .2, .375, .365, .005].forEach((v, i) => {
        const x = a.sx(i + 1), y = a.sy(v);
        s += `<rect x="${x - 18.5}" y="${y}" width="37" height="${467 - y}" fill="#352a87" stroke="#000"/>`;
        s += txt(x, y - (i == 2 ? 17 : 18), v);
        s += txt(x, 486, `场景${i + 1}`, 16.5);
      });
      s += txt(262, 119, '各场景概率结果', 17.5, 'middle', 'fill-opacity=".85"');
      s += txt(262, 510, '场景', 17.5, 'middle', 'fill-opacity=".85"');
      document.getElementById('fig4').innerHTML = s;
    }

    // Figure 3
    {
      const a = axes({ x0: 57.5, x1: 484.5, y0: 985, y1: 645, xmin: 0, xmax: 25, ymin: 0, ymax: 1, xt: [5, 10, 15, 20], yt: [0, .2, .4, .6, .8, 1], ylab: v => String(+v.toFixed(1)) });
      const vals = [0, 0, 0, 0, 0, .046, .16, .314, .436, .523, .626, .978, .725, .608, .464, .478, .27, .1, .012, 0, 0, 0, 0, 0];
      const pts = vals.map((v, i) => [a.sx(i + 1), a.sy(v)]);
      let s = a.s + poly(pts, '#1273ad');
      pts.forEach(([x, y]) => {
        s += `<path d="M${x - 6} ${y}h12M${x} ${y - 6}v12M${x - 4.500} ${y - 4.500}l9 9M${x + 4.500} ${y - 4.500}l-9 9" stroke="#1273ad" fill="none"/>`;
      });
      s += txt(271, 632, '等效风机出力图', 17.5, 'middle', 'fill-opacity=".85"');
      s += txt(10, 815, '风机出力', 17.5, 'middle', 'fill-opacity=".8" transform="rotate(-90 10 815)"');
      document.getElementById('fig3').innerHTML = s;
    }

    // Figure 2
    {
      const a = axes({ x0: 1184, x1: 1686, y0: 1017, y1: 657.5, xmin: 0, xmax: 25, ymin: 0, ymax: 1.2, xt: [5, 10, 15, 20], yt: [.2, .4, .6, .8, 1, 1.2], ylab: v => String(+v.toFixed(1)) });
      const v = y => 1.2 - (y - 415) / 898;
      const rows = [
        [1330, 1210, 1110, 1050, 810, 735, 732, 940, 1120, 1170, 1220, 1410],
        [1290, 1210, 1150, 1020, 820, 610, 960, 1000, 1030, 1003, 1220, 1400],
        [1320, 1180, 1060, 975, 935, 780, 750, 1062, 1050, 1065, 1240, 1395],
        [1310, 1210, 1110, 1060, 1005, 420, 877, 797, 1115, 1070, 1270, 1420],
        [1355, 1165, 1090, 950, 935, 760, 975, 908, 1100, 1050, 1300, 1410]
      ];
      let s = a.s;
      rows.forEach((r, i) => {
        const pts = [[a.sx(5), a.sy(0)], [a.sx(6), a.sy(.035)]];
        r.forEach((y, k) => pts.push([a.sx(7 + k), a.sy(v(y))]));
        pts.push([a.sx(19), a.sy(.01)], [a.sx(20), a.sy(0)]);
        s += poly(pts, colors[i], .9);
      });
      s += txt(1435, 645, '场景削减图', 17.5, 'middle', 'fill-opacity=".85"');
      document.getElementById('fig2').innerHTML = s;
    }

    // Figure 11: viele Szenarien, Zufall mit festem Seed
    {
      const a = axes({ x0: 1234.5, x1: 1685, y0: 487.5, y1: 152, xmin: 0, xmax: 25, ymin: 0, ymax: 1.4, xt: [0, 5, 10, 15, 20, 25], yt: [0, .2, .4, .6, .8, 1, 1.2, 1.4], xlab: v => v, ylab: v => String(+v.toFixed(1)) });
      let seed = 12345;
      const rnd = () => (seed = (seed * 16807) % 2147483647) / 2147483647;
      const gauss = () => (rnd() + rnd() + rnd() + rnd() - 2) * 1.73;
      const mean = { 6: .035, 7: .13, 8: .33, 9: .48, 10: .52, 11: .67, 12: 1.0, 13: .73, 14: .66, 15: .53, 16: .38, 17: .22, 18: .09, 19: .012 };
      const sd = { 6: .006, 7: .02, 8: .035, 9: .04, 10: .04, 11: .045, 12: .11, 13: .055, 14: .055, 15: .045, 16: .04, 17: .03, 18: .018, 19: .004 };
      let s = a.s;
      for (let n = 0; n < 221; n++) {
        const c = colors[n % 7];
        const pts = [];
        for (let t = 1; t <= 24; t++) {
          const m = mean[t] || 0;
          pts.push([a.sx(t), a.sy(m ? Math.max(0, m + gauss() * sd[t]) : 0)]);
        }
        s += poly(pts, c, .9);
      }
      const over = [
        ['#4DBEEE', [[9, .56], [10, .47], [11, .435], [12, .75], [13, .6], [14, .47]]],
        ['#0072BD', [[11, .7], [12, 1.24], [13, .74]]],
        ['#EDB120', [[9, .56], [10, .66], [11, .75], [12, .95], [13, .91], [14, .83], [15, .62]]],
        ['#77AC30', [[10, .42], [11, .69], [12, .74], [13, .68]]],
        ['#A2142F', [[9, .55], [10, .64], [11, .66], [12, 1.15], [13, .72], [14, .83], [15, .6]]]
      ];
      over.forEach(([c, r]) => { s += poly(r.map(([t, v]) => [a.sx(t), a.sy(v)]), c); });
      s += txt(1459, 138, '场景生成图', 17.5, 'middle', 'fill-opacity=".85"');
      document.getElementById('fig11').innerHTML = s;
    }

    // Figure 9: 3D-Ansicht, Koordinaten aus der Bildvorlage abgelesen
    {
      const P = (x, y) => [540 + x / 2.8, 520 + y / 3];
      const L = (x1, y1, x2, y2, c = '#d8d8d8', w = 1) => { const a = P(x1, y1), b = P(x2, y2); return line(a[0], a[1], b[0], b[1], c, w); };
      const PG = pts => pts.map(p => P(p[0], p[1]).join(',')).join(' ');
      let s = `<polygon fill="#fff" points="${PG([[215, 597], [895, 403], [1415, 660], [1415, 1222], [735, 1417], [215, 1160]])}"/>`;
      [[215, 972, 895, 778], [215, 785, 895, 590], [895, 778, 1415, 1035], [895, 590, 1415, 848], [215, 597, 895, 403], [895, 403, 1415, 660]].forEach(l => { s += L(...l); });
      [[381, 550, 381, 1112], [553, 500, 553, 1063], [724, 452, 724, 1014], [895, 403, 895, 965], [1067, 488, 1067, 1050], [1242, 575, 1242, 1136], [1415, 660, 1415, 1222]].forEach(l => { s += L(...l); });
      [[215, 1160, 895, 965], [895, 965, 1415, 1222], [381, 1112, 901, 1369], [553, 1063, 1073, 1320], [724, 1014, 1244, 1271], [1067, 1050, 387, 1245], [1242, 1136, 562, 1331]].forEach(l => { s += L(...l); });
      [[215, 597, 215, 1160], [215, 1160, 735, 1417], [735, 1417, 1415, 1222]].forEach(l => { s += L(...l, '#262626'); });
      [[215, 597, 200, 592], [215, 785, 200, 780], [215, 972, 200, 967], [215, 1160, 195, 1155], [387, 1245, 370, 1253], [562, 1331, 545, 1338], [1073, 1320, 1090, 1332], [1244, 1271, 1262, 1282], [1415, 1222, 1433, 1232], [901, 1369, 918, 1380]].forEach(l => { s += L(...l, '#262626'); });
      const curves = [
        [[320, 1215], [405, 1253], [422, 1237], [440, 1162], [473, 1137], [490, 1075], [510, 992], [527, 1002], [545, 1045], [562, 1150], [580, 1190], [598, 1260], [615, 1335], [632, 1385], [650, 1400]],
        [[487, 1165], [575, 1205], [592, 1185], [610, 1110], [627, 1030], [645, 1050], [680, 1038], [697, 900], [715, 1000], [732, 1090], [750, 1155], [767, 1205], [800, 1305], [818, 1330], [888, 1365]],
        [[657, 1115], [745, 1157], [760, 1130], [778, 1070], [795, 1008], [815, 1008], [832, 1022], [850, 900], [867, 925], [885, 995], [902, 1020], [920, 1060], [937, 1130], [955, 1215], [972, 1250], [990, 1278], [1060, 1315]],
        [[830, 1065], [915, 1107], [932, 1090], [950, 1035], [967, 960], [985, 985], [1002, 862], [1020, 902], [1037, 720], [1055, 975], [1072, 1010], [1090, 1035], [1107, 1090], [1142, 1190], [1160, 1230], [1230, 1265]],
        [[1000, 1018], [1085, 1057], [1102, 1035], [1120, 995], [1137, 900], [1155, 930], [1172, 860], [1190, 893], [1208, 813], [1225, 895], [1242, 910], [1260, 975], [1278, 1020], [1295, 1112], [1312, 1155], [1330, 1180], [1400, 1215]]
      ];
      curves.forEach((c, i) => { s += poly(c.map(p => P(p[0], p[1])), colors[i], .85); });
      [[147, 590, '1.5'], [165, 775, '1'], [143, 965, '0.5'], [165, 1153, '0'], [148, 1210, '30'], [325, 1297, '20'], [500, 1378, '10'], [1463, 1275, '5'], [1292, 1327, '4'], [1122, 1373, '3']].forEach(([x, y, t]) => {
        const p = P(x, y); s += txt(p[0], p[1], t);
      });
      const t = P(815, 361); s += txt(t[0], t[1], '场景削减图', 17.5, 'middle', 'fill-opacity=".85"');
      const yl = P(67, 882); s += txt(yl[0], yl[1], '风机出力值', 17.5, 'middle', `fill-opacity=".8" transform="rotate(-90 ${yl[0]} ${yl[1]})"`);
      document.getElementById('fig9').innerHTML = s;
    }

    // Editor-Zeilen
    const kw = w => `<span class="text-[#2323a8]">${w}</span>`;
    const hl = '<span class="bg-[#c9e6e8] py-[5px]">Ws</span>';
    const code = [
      [39, 1, '', 'x=zeros(m,m);'],
      [40, 1, 'open', `${kw('for')} i=1:m`],
      [41, 1, 'open2', `    ${kw('for')} j=1:m`],
      [42, 1, 'bar', `            x(i,j)=sum(abs(${hl}(i,:)-${hl}(j,:)));`],
      [43, 1, 'tick2', `    ${kw('end')}`],
      [44, 1, 'tick', kw('end')],
      [45, 0, '', ''],
      [46, 0, '', `<span class="text-[#2a8a2a]">%<span class="text-[17px] tracking-normal font-['Noto_Sans_CJK_SC']">计算每个场景与剩余场景的概率距离之和</span>y</span>`],
      [47, 1, '', 'y=zeros(m,1);'],
      [48, 1, 'open', `${kw('for')} i=1:m`]
    ];
    const foldBox = '<span class="absolute left-[20px] top-[7px] w-[13px] h-[13px] border border-[#999] bg-white flex items-center justify-center"><span class="w-[7px] h-px bg-[#777]"></span></span>';
    const foldBar = '<span class="absolute left-[26px] w-px bg-[#aaa] top-0 h-full"></span>';
    const foldLow = '<span class="absolute left-[26px] w-px bg-[#aaa] top-[20px] h-[6px]"></span>';
    const foldTick = '<span class="absolute left-[26px] w-px bg-[#aaa] top-0 h-[13px]"></span><span class="absolute left-[26px] top-[13px] w-[7px] h-px bg-[#aaa]"></span>';
    const fold = { '': '', open: foldLow + foldBox, open2: foldBar + foldBox, bar: foldBar, tick2: foldBar + foldTick, tick: foldTick };
    document.getElementById('code').innerHTML = code.map(([n, dash, f, src]) => `
      <div class="flex h-[26px] items-center whitespace-pre">
        <span class="w-[34px] h-full bg-[#f0f0f0] text-right pr-[4px] leading-[26px] border-r border-white">${n}</span>
        <span class="w-[17px] h-full bg-[#f0f0f0] flex items-center">${dash ? '<span class="ml-[3px] w-[11px] h-[2px] bg-[#333]"></span>' : ''}</span>
        <span class="relative w-[38px] h-full shrink-0">${fold[f]}</span>
        <span>${src}</span>
      </div>`).join('');
  });
</script>
</body>
</html>
